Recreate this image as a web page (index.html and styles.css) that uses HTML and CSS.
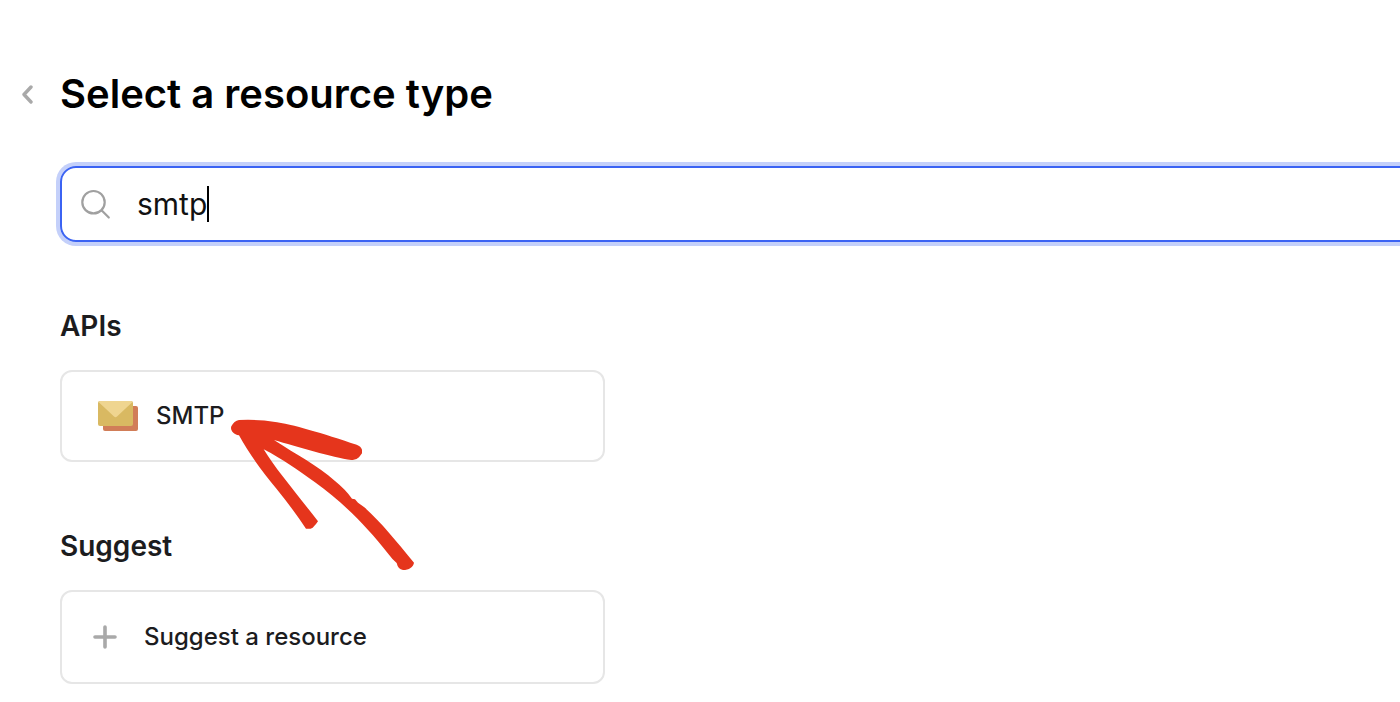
FILE: index.html
```html
<!DOCTYPE html>
<html lang="en">
<head>
<meta charset="utf-8">
<title>Select a resource type</title>
<link rel="stylesheet" href="styles.css">
</head>
<body>
<main class="page">
  <header class="header">
    <button class="back" type="button" aria-label="Back">
      <svg width="14" height="20" viewBox="0 0 14 20"><path d="M11 3 4 10.500l7 7.500" fill="none" stroke="#a9a9a9" stroke-width="3.400" stroke-linecap="round" stroke-linejoin="round"/></svg>
    </button>
    <h1 class="title">Select a resource type</h1>
  </header>
  <div class="content">
    <label class="search">
      <svg class="search-icon" width="32" height="32" viewBox="0 0 32 32" aria-hidden="true"><g fill="none" stroke="#a0a0a0" stroke-width="2.200" stroke-linecap="round"><circle cx="13.500" cy="14.200" r="11.200"/><path d="m21.800 22.500 7 7"/></g></svg>
      <input class="search-input" type="text" value="smtp" size="4" aria-label="Search resources">
      <span class="caret"></span>
    </label>
    <section class="group">
      <h2 class="group-title">APIs</h2>
      <div class="card-wrap">
        <button class="card card-api" type="button">
          <svg class="mail" width="42" height="32" viewBox="0 0 42 32" aria-hidden="true">
            <rect x="6" y="6" width="35" height="25" rx="2" fill="#d17d58"/>
            <rect x="1" y="1" width="35" height="25" rx="2" fill="#d9b962"/>
            <path d="M1.500 2Q2 1 3 1h31q1 0 1.500 1L20 16.500q-1.500 1.400-3 0Z" fill="#efd590"/>
          </svg>
          <span>SMTP</span>
        </button>
        <svg class="arrow" width="210" height="180" viewBox="0 0 630 540" aria-hidden="true"><path fill="#e5351c" d="M57 91C39 88 30 73 34 64Q42 48 57 45Q120 43 160 50C218 57 307 85 410 119Q423 124 426 134V145L417 157Q407 167 394 165C338 157 230 125 162 105C229 149 292 181 345 228Q377 254 396 281L405 283L414 293L433 307C480 348 530 410 582 473C580 486 567 495 549 495Q534 493 530 474Q518 464 507 449C433 355 365 290 285 232C230 192 190 164 131 133C165 190 228 263 294 349Q288 359 278 368Q270 373 258 371C231 330 202 292 170 252C130 203 87 147 57 91Z"/></svg>
      </div>
    </section>
    <section class="group">
      <h2 class="group-title">Suggest</h2>
      <button class="card card-suggest" type="button">
        <svg width="26" height="26" viewBox="0 0 26 26" aria-hidden="true"><path d="M13 3v20M3 13h20" fill="none" stroke="#a9a9a9" stroke-width="3.600" stroke-linecap="round"/></svg>
        <span>Suggest a resource</span>
      </button>
    </section>
  </div>
</main>
</body>
</html>
```
FILE: styles.css
```css
* {
  box-sizing: border-box;
}

body {
  margin: 0;
  background: #fff;
  color: #1c1c1e;
  font-family: Inter, "Liberation Sans", sans-serif;
  overflow-x: hidden;
}

.page {
  padding: 66px 0 16px;
}

.header {
  display: flex;
  align-items: center;
  gap: 20px;
  padding-left: 20px;
}

.back {
  display: flex;
  width: 20px;
  padding: 0;
  border: 0;
  background: none;
}

.title {
  margin: 0;
  color: #000;
  font-size: 40px;
  line-height: 56px;
  font-weight: 600;
}

.content {
  padding-left: 60px;
}

.search {
  display: flex;
  align-items: center;
  height: 76px;
  margin-top: 44px;
  margin-right: -20px;
  padding-left: 18px;
  border: 2px solid #3b63f3;
  border-radius: 16px;
  box-shadow: 0 0 0 4px #c4d0fa;
  cursor: text;
}

.search-icon {
  margin-right: 25px;
}

.search-input {
  field-sizing: content;
  padding: 0;
  border: 0;
  outline: 0;
  background: none;
  color: #111;
  font: 400 30px/40px Inter, "Liberation Sans", sans-serif;
}

.caret {
  width: 2px;
  height: 36px;
  background: #000;
}

.group {
  margin-top: 64px;
}

.group + .group {
  margin-top: 64px;
}

.group-title {
  margin: 0 0 24px;
  font-size: 28px;
  line-height: 40px;
  font-weight: 600;
}

.card-wrap {
  position: relative;
}

.card {
  display: flex;
  align-items: center;
  width: 100%;
  max-width: 545px;
  border: 2px solid #e6e6e6;
  border-radius: 12px;
  background: #fff;
  color: #1c1c1e;
  font: 500 24px/32px Inter, "Liberation Sans", sans-serif;
  text-align: left;
}

.card-api {
  gap: 17px;
  padding: 28px 35px;
}

.card-suggest {
  gap: 26px;
  padding: 29px 30px;
}

.arrow {
  position: absolute;
  top: 35px;
  left: 160px;
  pointer-events: none;
}
```
